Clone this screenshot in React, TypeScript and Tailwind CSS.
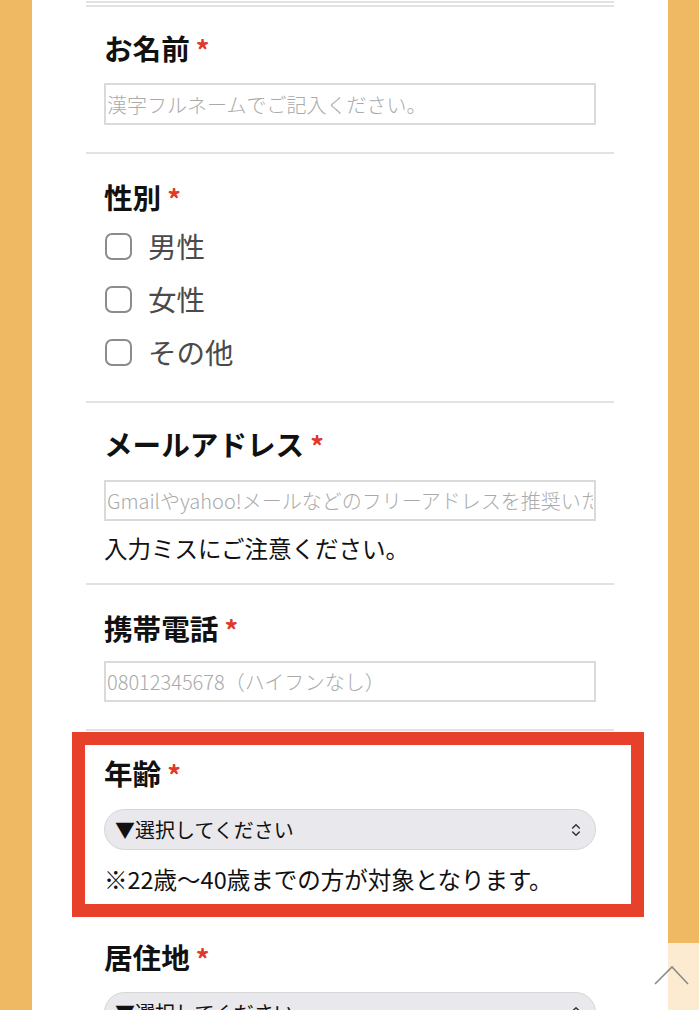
import { ChevronsUpDown } from "lucide-react";

const Label = ({ text }: { text: string }) => (
  <div className="flex items-center h-[39px]">
    <span className="text-[28.6px] font-bold leading-[39px] text-[#111]">{text}</span>
    <span className="ml-[6px] mt-[3px] text-[27px] font-bold leading-none text-[#e0392b]">*</span>
  </div>
);

const TextInput = ({ placeholder, className = "" }: { placeholder: string; className?: string }) => (
  <input
    type="text"
    placeholder={placeholder}
    className={`block w-full h-[41px] border-2 border-[#dadada] bg-white px-[1px] text-[20px] font-light text-[#333] placeholder:text-[#aaaaaa] outline-none ${className}`}
  />
);

const FakeSelect = ({ className = "" }: { className?: string }) => (
  <div
    className={`flex items-center justify-between h-[41px] rounded-[21px] border border-[#d6d6d6] bg-[#e9e9ed] pl-[10px] pr-[11px] ${className}`}
  >
    <span className="text-[20px] leading-none text-[#111]">▼選択してください</span>
    <ChevronsUpDown size={16} strokeWidth={2.2} className="text-[#333]" />
  </div>
);

const genders = ["男性", "女性", "その他"];

export default function App() {
  return (
    <div className="relative min-h-screen bg-[#efb862] font-['Noto_Sans_CJK_JP','Noto_Sans',sans-serif]">
      <div className="ml-[32px] w-[636px] bg-white px-[54px] pb-[200px]">
        {/* top double rule */}
        <div className="pt-px">
          <div className="h-[2px] bg-[#e2e2e2]" />
          <div className="mt-[2px] h-[2px] bg-[#e2e2e2]" />
        </div>

        {/* お名前 */}
        <div className="border-b-2 border-[#e2e2e2] px-[18px] pt-[21px] pb-[27px]">
          <Label text="お名前" />
          <TextInput placeholder="漢字フルネームでご記入ください。" className="mt-[16px] h-[42px]" />
        </div>

        {/* 性別 */}
        <div className="border-b-2 border-[#e2e2e2] px-[18px] pt-[23px] pb-[22px]">
          <Label text="性別" />
          <div className="mt-[4px]">
            {genders.map((g) => (
              <label key={g} className="flex items-center h-[53px] gap-[16px]">
                <span className="ml-px w-[27px] h-[27px] rounded-[7px] border-2 border-[#8c8c8c] bg-white" />
                <span className="text-[28.5px] leading-none text-[#4a4a4a]">{g}</span>
              </label>
            ))}
          </div>
        </div>

        {/* メールアドレス */}
        <div className="border-b-2 border-[#e2e2e2] px-[18px] pt-[21px] pb-[18px]">
          <Label text="メールアドレス" />
          <TextInput
            placeholder="Gmailやyahoo!メールなどのフリーアドレスを推奨いたします。"
            className="mt-[17px]"
          />
          <p className="mt-[11px] text-[23.5px] leading-[33px] text-[#111]">入力ミスにご注意ください。</p>
        </div>

        {/* 携帯電話 */}
        <div className="border-b-2 border-[#e2e2e2] px-[18px] pt-[23px] pb-[27px]">
          <Label text="携帯電話" />
          <TextInput placeholder="08012345678（ハイフンなし）" className="mt-[14px]" />
        </div>

        {/* 年齢 */}
        <div className="relative border-b-2 border-[#e2e2e2] px-[18px] pt-[22px] pb-[18px]">
          <Label text="年齢" />
          <FakeSelect className="mt-[17px]" />
          <p className="mt-[13px] text-[23.5px] leading-[33px] text-[#111]">
            ※22歳〜40歳までの方が対象となります。
          </p>
          <div className="pointer-events-none absolute left-[-14px] top-[1px] w-[572px] h-[185px] border-[13px] border-[#e7412b]" />
        </div>

        {/* 居住地 */}
        <div className="px-[18px] pt-[21px] pb-[18px]">
          <Label text="居住地" />
          <FakeSelect className="mt-[16px]" />
        </div>
      </div>

      {/* page-top button */}
      <div className="fixed right-0 bottom-[14px] w-[31px] h-[67px] bg-[#fcebd0]" />
      <svg
        className="fixed left-[653px] top-[965px]"
        width="38"
        height="22"
        viewBox="0 0 38 22"
        fill="none"
      >
        <polyline points="2,19 19,2 35,19" stroke="#8a8a8a" strokeWidth="1.6" />
      </svg>

      {/* bottom white strip */}
      <div className="fixed left-0 right-0 bottom-0 h-[14px] bg-white" />
    </div>
  );
}
